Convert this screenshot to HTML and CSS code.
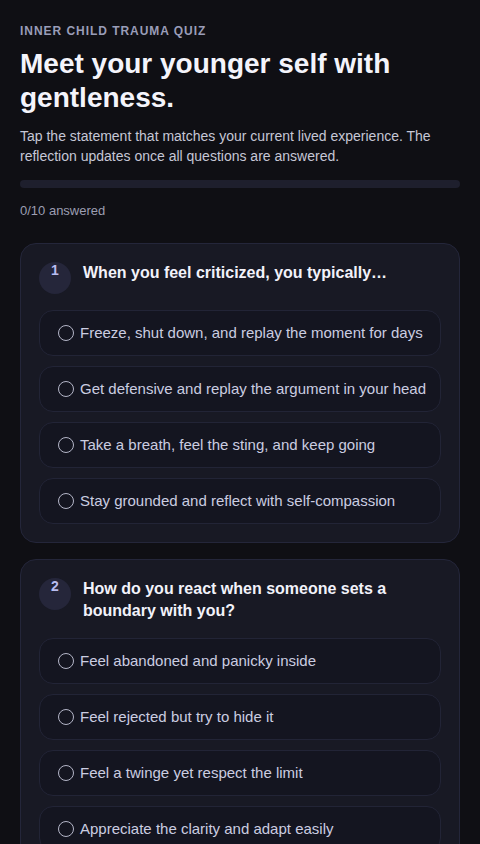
FILE: index.html
```html
<!DOCTYPE html>
<html lang="en">
<head>
  <meta charset="UTF-8">
  <meta name="viewport" content="width=device-width, initial-scale=1.0">
  <title>Inner Child Trauma Quiz</title>
  <link rel="stylesheet" href="styles.css">
</head>
<body>
  <header class="intro">
    <p class="eyebrow">INNER CHILD TRAUMA QUIZ</p>
    <h1>Meet your younger self with gentleness.</h1>
    <p class="lead">Tap the statement that matches your current lived experience. The reflection updates once all questions are answered.</p>
    <div class="progress"><div class="progress-fill" style="width: 0%;"></div></div>
    <p class="progress-label">0/10 answered</p>
  </header>

  <main class="questions">
    <section class="question-card">
      <div class="question-head">
        <span class="badge">1</span>
        <h2>When you feel criticized, you typically…</h2>
      </div>
      <div class="options">
        <button class="option"><span class="radio"></span>Freeze, shut down, and replay the moment for days</button>
        <button class="option"><span class="radio"></span>Get defensive and replay the argument in your head</button>
        <button class="option"><span class="radio"></span>Take a breath, feel the sting, and keep going</button>
        <button class="option"><span class="radio"></span>Stay grounded and reflect with self-compassion</button>
      </div>
    </section>

    <section class="question-card">
      <div class="question-head">
        <span class="badge">2</span>
        <h2>How do you react when someone sets a boundary with you?</h2>
      </div>
      <div class="options">
        <button class="option"><span class="radio"></span>Feel abandoned and panicky inside</button>
        <button class="option"><span class="radio"></span>Feel rejected but try to hide it</button>
        <button class="option"><span class="radio"></span>Feel a twinge yet respect the limit</button>
        <button class="option"><span class="radio"></span>Appreciate the clarity and adapt easily</button>
      </div>
    </section>
  </main>
</body>
</html>
```

FILE: styles.css
```css
* {
  margin: 0;
  padding: 0;
  box-sizing: border-box;
}
body {
  font-family: 'Liberation Sans', Arial, sans-serif;
  background: #0f0f14;
  color: #f0f0f8;
  padding: 23px 20px 40px;
}
.eyebrow {
  font-size: 12px;
  line-height: 16px;
  font-weight: bold;
  letter-spacing: 0.08em;
  color: #9a9db8;
}
h1 {
  font-size: 28px;
  line-height: 34px;
  font-weight: bold;
  color: #f4f4fb;
  margin-top: 8px;
}
.lead {
  font-size: 14px;
  line-height: 20px;
  color: #c6c7d6;
  margin-top: 11px;
}
.progress {
  height: 8px;
  border-radius: 4px;
  background: #1e1f2d;
  margin-top: 14px;
  overflow: hidden;
}
.progress-fill {
  height: 100%;
  background: #8b8ff0;
}
.progress-label {
  font-size: 13px;
  line-height: 18px;
  color: #9c9eb2;
  margin-top: 14px;
}
.questions {
  display: flex;
  flex-direction: column;
  gap: 16px;
  margin-top: 23px;
}
.question-card {
  background: #181924;
  border: 1px solid #24263a;
  border-radius: 16px;
  padding: 18px;
}
.question-head {
  display: flex;
  gap: 12px;
  align-items: flex-start;
}
.badge {
  flex: 0 0 32px;
  width: 32px;
  height: 32px;
  border-radius: 50%;
  background: #25263a;
  color: #b9bdf0;
  font-size: 14px;
  line-height: 16px;
  font-weight: bold;
  text-align: center;
}
h2 {
  font-size: 16px;
  line-height: 22px;
  font-weight: bold;
  color: #f2f2fa;
}
.options {
  display: flex;
  flex-direction: column;
  gap: 10px;
  margin-top: 16px;
}
.option {
  display: flex;
  align-items: center;
  gap: 6px;
  width: 100%;
  text-align: left;
  font-family: inherit;
  font-size: 15px;
  line-height: 22px;
  color: #cbcde0;
  background: #141520;
  border: 1px solid #222436;
  border-radius: 14px;
  padding: 11px 8px 11px 18px;
  cursor: pointer;
}
.option:hover {
  border-color: #34374f;
}
.radio {
  flex: 0 0 16px;
  width: 16px;
  height: 16px;
  border-radius: 50%;
  border: 1.5px solid #b4b6c8;
}
```
